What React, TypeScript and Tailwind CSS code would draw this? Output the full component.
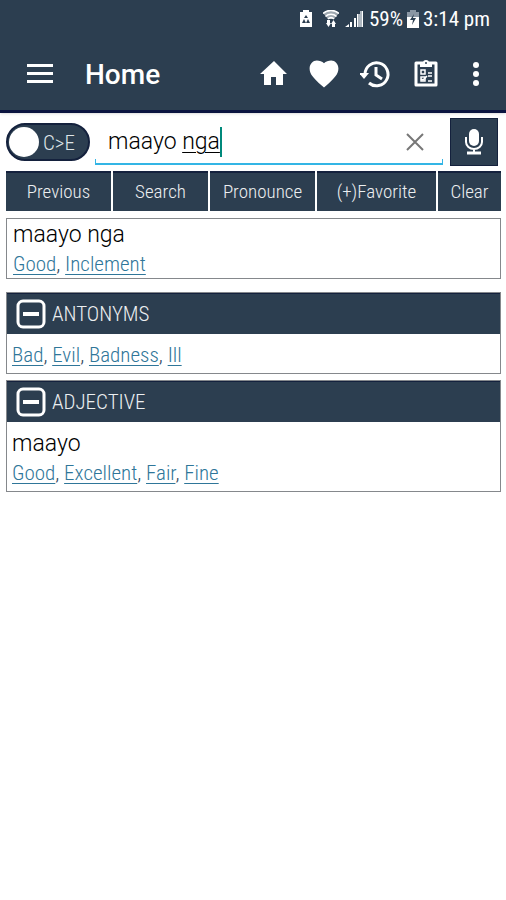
import { Fragment, useState } from "react";

type Section = {
  title: string;
  word?: string;
  links: string[];
};

const SECTIONS: Section[] = [
  { title: "ANTONYMS", links: ["Bad", "Evil", "Badness", "Ill"] },
  { title: "ADJECTIVE", word: "maayo", links: ["Good", "Excellent", "Fair", "Fine"] },
];

const CONDENSED = "font-['Roboto_Condensed','Roboto',sans-serif]";

function StatusBar() {
  return (
    <div className="flex h-[38px] items-center justify-end pr-4 text-white">
      <svg width="14" height="18" viewBox="0 0 14 18" className="mr-[10px]" aria-hidden="true">
        <path d="M4 0h6v2h3v15H1V2h3z" fill="#fff" />
        <path d="M7 5l2 3H5zM3 13l2-4 2 4zM7 13l2-4 2 4z" fill="#2c3e50" />
      </svg>
      <svg width="16" height="18" viewBox="0 0 16 18" className="mr-[6px]" aria-hidden="true">
        <path d="M0 3a12 12 0 0 1 16 0L11 9H5z" fill="#fff" opacity="0.55" />
        <path d="M0 3.500a12 12 0 0 1 16 0M2.500 6.500a8 8 0 0 1 11 0M5 9a4 4 0 0 1 6 0" fill="none" stroke="#fff" strokeWidth="1.600" />
        <path d="M4 10h3v3h1l-2.500 4L3 13h1zM9 17v-3H8l2.500-4 2.500 4h-1v3z" fill="#fff" />
      </svg>
      <svg width="18" height="18" viewBox="0 0 18 18" className="mr-[6px]" aria-hidden="true">
        <path d="M0 17l4-3v3zM5 12h2v5H5zM9 8h2v9H9z" fill="#fff" />
        <path d="M12 4h3v13h-3zM15 1h3v16h-3z" fill="#aeb7c0" />
        <path d="M12 4h1v13h-1zM17 1h1v16h-1z" fill="#fff" />
      </svg>
      <span className={`text-[21px] leading-6 ${CONDENSED}`}>59%</span>
      <svg width="12" height="18" viewBox="0 0 12 18" className="mx-1" aria-hidden="true">
        <path d="M3 0h6v2h3v6H0V2h3z" fill="#8a96a3" />
        <path d="M0 7h12v11H0z" fill="#fff" />
        <path d="M7 4L3 10h3l-1 5 4-7H6z" fill="#2c3e50" />
      </svg>
      <span className={`text-[21px] leading-6 ${CONDENSED}`}>3:14 pm</span>
    </div>
  );
}

function AppBar() {
  return (
    <div className="flex h-[72px] items-center pr-[14px] pl-[26px] text-white">
      <button type="button" aria-label="Menu" className="mr-[31px]">
        <svg width="28" height="20" viewBox="0 0 28 20" fill="#fff">
          <path d="M1 0h26v3H1zM1 8h26v3H1zM1 16h26v3H1z" />
        </svg>
      </button>
      <h1 className="flex-1 pt-px font-[Roboto,sans-serif] text-[28px] leading-8 font-medium">Home</h1>
      <div className="flex items-center gap-5">
        <button type="button" aria-label="Home">
          <svg width="32" height="32" viewBox="0 0 32 32" fill="#fff">
            <path d="M15 27v-8h5v8h7V16h4L18 3 4 16h4v11z" />
          </svg>
        </button>
        <button type="button" aria-label="Favorites">
          <svg width="32" height="32" viewBox="2 2 20 20" fill="#fff">
            <path d="M12 20.500l-1.450-1.320C5.400 14.500 3 12 3 8.500 3 5.600 5.200 3.500 7.500 3.500c1.740 0 3.410.510 4.500 1.790C13.090 4.010 14.760 3.500 16.500 3.500 18.800 3.500 21 5.600 21 8.500c0 3.500-2.400 6-7.550 10.680L12 20.500z" />
          </svg>
        </button>
        <button type="button" aria-label="History">
          <svg width="32" height="32" viewBox="0 0 32 32" fill="none" stroke="#fff" strokeWidth="3">
            <path d="M5 16a11.500 11.500 0 1 1 4 9" />
            <path d="M16 9v8l6 4" />
            <path d="M-1 15h10l-5 6z" fill="#fff" stroke="none" />
          </svg>
        </button>
        <button type="button" aria-label="Quiz">
          <svg width="28" height="32" viewBox="0 0 28 32">
            <path d="M4 5h20v22H4z" fill="#2c3e50" stroke="#fff" strokeWidth="3" strokeLinejoin="round" />
            <path d="M8 9V5h3a3 3 0 0 1 6 0h3v4z" fill="#fff" />
            <circle cx="14" cy="5" r="1" fill="#2c3e50" />
            <path d="M9 12h4v4H9zM9 19h4v4H9z" fill="none" stroke="#fff" strokeWidth="1.500" />
            <path d="M16 15h4M16 18h4M16 23h4M9 21l2 1 4-4" fill="none" stroke="#fff" strokeWidth="1.500" />
          </svg>
        </button>
        <button type="button" aria-label="More options">
          <svg width="32" height="32" viewBox="0 0 32 32" fill="#fff">
            <circle cx="16" cy="7" r="3" />
            <circle cx="16" cy="16" r="3" />
            <circle cx="16" cy="25" r="3" />
          </svg>
        </button>
      </div>
    </div>
  );
}

function LinkList({ links }: { links: string[] }) {
  return (
    <p className={`text-[21px] leading-7 font-light text-[#34495e] ${CONDENSED}`}>
      {links.map((link, i) => (
        <Fragment key={link}>
          {i > 0 && ", "}
          <a href={`#${link}`} className="text-[#2f7699] underline decoration-1 underline-offset-3">{link}</a>
        </Fragment>
      ))}
    </p>
  );
}

export default function App() {
  const [query, setQuery] = useState("maayo nga");
  const [toEnglish, setToEnglish] = useState(true);
  const [open, setOpen] = useState<Record<string, boolean>>({ ANTONYMS: true, ADJECTIVE: true });

  const words = query.split(" ");
  const last = words.pop();
  const actionClass = `h-10 border-t-2 border-[#14213d] bg-[#2c3e50] pb-px text-center text-[19px] leading-6 font-light text-[#eceff1] ${CONDENSED}`;

  return (
    <div className="min-h-screen bg-white font-[Roboto,sans-serif] text-[#1b2030]">
      <header className="border-b-3 border-[#0b1440] bg-[#2c3e50] shadow">
        <StatusBar />
        <AppBar />
      </header>

      <main className="pt-[5px] pr-[5px] pb-4 pl-[6px]">
        <div className="flex h-12 items-center pr-[3px]">
          <label className={`flex h-[38px] w-[84px] shrink-0 cursor-pointer items-center gap-1 rounded-full border-2 border-[#14213d] bg-[#2c3e50] px-px text-[#dfe4e8] ${toEnglish ? "" : "flex-row-reverse"}`}>
            <input type="checkbox" className="sr-only" checked={toEnglish} onChange={(e) => setToEnglish(e.target.checked)} />
            <span className="h-[30px] w-[30px] shrink-0 rounded-full bg-white" />
            <span className={`pt-px text-[21px] leading-7 font-light ${CONDENSED}`}>{toEnglish ? "C>E" : "E>C"}</span>
          </label>

          <div className="relative ml-[5px] flex h-[46px] min-w-0 flex-1 items-center">
            <input
              aria-label="Search word"
              value={query}
              onChange={(e) => setQuery(e.target.value)}
              spellCheck={false}
              className="h-[44px] w-full min-w-0 bg-transparent pl-[13px] text-[23px] font-light text-transparent outline-none"
            />
            {/* shows the word being composed as underlined, with the caret after it */}
            <div aria-hidden="true" className="pointer-events-none absolute inset-0 flex items-center pl-[13px] text-[23px] leading-7 font-light whitespace-pre text-black">
              {words.length > 0 && `${words.join(" ")} `}
              <span className="underline decoration-1 underline-offset-3">{last}</span>
              <span className="h-[30px] w-[2px] bg-[#00897b]" />
            </div>
            <div className="pointer-events-none absolute inset-x-0 bottom-0 h-[6px] border-x border-b-2 border-[#33b5e5]" />
            <button type="button" aria-label="Clear text" className="absolute right-[18px]" onClick={() => setQuery("")}>
              <svg width="20" height="20" viewBox="0 0 20 20" fill="none" stroke="#777" strokeWidth="2">
                <path d="M2 2l16 16M18 2L2 18" />
              </svg>
            </button>
          </div>

          <button type="button" aria-label="Voice search" className="ml-[7px] flex h-12 w-12 shrink-0 items-center justify-center border border-[#14213d] bg-[#2c3e50]">
            <svg width="20" height="28" viewBox="0 0 20 28" fill="none" stroke="#fff" strokeWidth="2">
              <rect x="5" y="1" width="10" height="17" rx="5" fill="#fff" stroke="none" />
              <path d="M2 9v5a8 7 0 0 0 16 0V9M10 21v4" />
              <path d="M3 25h14" strokeWidth="3" />
            </svg>
          </button>
        </div>

        <div className="mt-[5px] grid grid-cols-[105fr_95fr_105fr_119fr_63fr] gap-[2px]">
          <button type="button" className={actionClass}>Previous</button>
          <button type="button" className={actionClass}>Search</button>
          <button type="button" className={actionClass}>Pronounce</button>
          <button type="button" className={actionClass}>(+)Favorite</button>
          <button type="button" className={actionClass} onClick={() => setQuery("")}>Clear</button>
        </div>

        <section className="mt-[7px] border border-[#85888c] px-[6px] pt-px">
          <h2 className="text-[23px] leading-[30px] font-light text-black">maayo nga</h2>
          <LinkList links={["Good", "Inclement"]} />
        </section>

        <div className="mt-[13px] flex flex-col gap-[6px]">
          {SECTIONS.map((section) => (
            <section key={section.title} className="border border-[#85888c]">
              <button
                type="button"
                aria-expanded={open[section.title]}
                onClick={() => setOpen((current) => ({ ...current, [section.title]: !current[section.title] }))}
                className={`flex h-[41px] w-full items-center gap-[6px] border-t border-[#14213d] bg-[#2c3e50] pl-[9px] text-[21px] leading-7 font-light text-[#eceff1] ${CONDENSED}`}
              >
                <svg width="30" height="30" viewBox="0 0 30 30" fill="none" stroke="#fff" strokeWidth="3">
                  <rect x="2" y="2" width="26" height="26" rx="5" />
                  <path d={open[section.title] ? "M7 15h16" : "M7 15h16M15 7v16"} strokeWidth="4" />
                </svg>
                {section.title}
              </button>
              {open[section.title] && (
                <div className="px-[5px] pt-[7px] pb-1">
                  {section.word && <h3 className="text-[23px] leading-[30px] font-light text-black">{section.word}</h3>}
                  <LinkList links={section.links} />
                </div>
              )}
            </section>
          ))}
        </div>
      </main>
    </div>
  );
}
